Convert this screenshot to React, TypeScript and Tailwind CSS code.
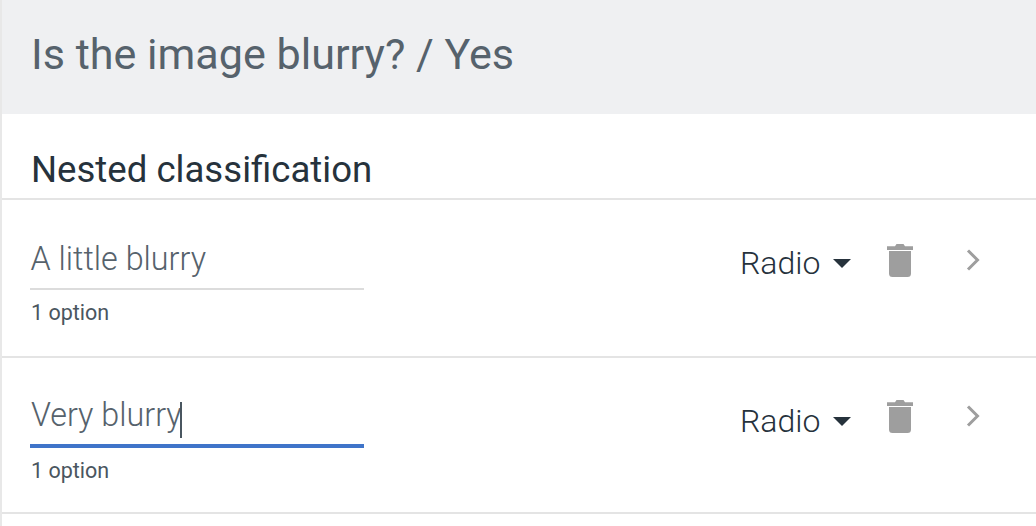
import React from "react";

// ── Row data ───────────────────────────────────────────────────────────────────

const ROWS = [
  { name: "A little blurry", active: false },
  { name: "Very blurry", active: true },
];

// ── Icons ──────────────────────────────────────────────────────────────────────

function Trash() {
  return (
    <svg width="26" height="33" viewBox="0 0 26 33" className="shrink-0">
      <path d="M0 2.2h8L9.5 0h7L18 2.2h8V6H0z" fill="#9e9e9e" />
      <path d="M2 7h22v22.5a3.5 3.5 0 0 1-3.5 3.5h-15A3.5 3.5 0 0 1 2 29.5z" fill="#9e9e9e" />
    </svg>
  );
}

function Chevron() {
  return (
    <svg width="14" height="22" viewBox="0 0 14 22" className="shrink-0">
      <path d="M2 1.5 11.5 11 2 20.5" fill="none" stroke="#9e9e9e" strokeWidth="3" />
    </svg>
  );
}

// ── Row ────────────────────────────────────────────────────────────────────────

function ClassificationRow({ name, active }: { name: string; active: boolean }) {
  return (
    <div className="flex h-[156px] items-start border-b-2 border-[#e4e4e4] pl-[28px] first:h-[158px]">
      <div className="w-[334px]">
        <div
          className={[
            "flex h-[90px] items-end pb-[8px] text-[32.3px] font-light leading-[42px] text-[#56626c]",
            active ? "border-b-[4px] border-[#3f74c9]" : "border-b-2 border-[#dcdcdc]",
          ].join(" ")}
        >
          <span className={active ? "ml-[1px]" : "ml-[0.5px]"}>{name}</span>
          {active && <span className="mb-[-2px] ml-[-2px] h-[36px] w-[2px] bg-[#4a5660]" />}
        </div>
        <p className="ml-[1px] mt-[9px] text-[21.5px] leading-[28px] text-[#4a5660]">1 option</p>
      </div>
      <div className="ml-[376px] flex items-center pt-[45px]">
        <span className="w-[82px] text-[32px] font-light leading-[36px] text-[#26323c]">Radio</span>
        <span className="ml-[11px] h-0 w-0 border-x-[9px] border-t-[9px] border-x-transparent border-t-[#26323c]" />
        <div className={active ? "ml-[36px] mt-[-6px] -translate-y-[2px]" : "ml-[36px] mt-[-6px]"}>
          <Trash />
        </div>
        <div className={active ? "ml-[53px] mt-[-6px] -translate-y-[2px]" : "ml-[53px] mt-[-6px]"}>
          <Chevron />
        </div>
      </div>
    </div>
  );
}

// ── Main export ────────────────────────────────────────────────────────────────

export default function App() {
  return (
    <div className="h-[526px] w-[1036px] overflow-hidden border-l-2 border-[#e8e8e8] bg-white font-['Roboto',sans-serif]">
      <div className="flex h-[114px] items-center bg-[#eff0f2] pb-[4px] pl-[29px] text-[43.1px] leading-none text-[#56626c]">
        Is the image blurry? / Yes
      </div>
      <div className="flex h-[86px] items-end border-b-2 border-[#e4e4e4] pb-[6px] pl-[29px] text-[36.6px] leading-[44px] text-[#26323c]">
        Nested classification
      </div>
      <div>
        {ROWS.map((row) => (
          <ClassificationRow key={row.name} name={row.name} active={row.active} />
        ))}
      </div>
    </div>
  );
}
